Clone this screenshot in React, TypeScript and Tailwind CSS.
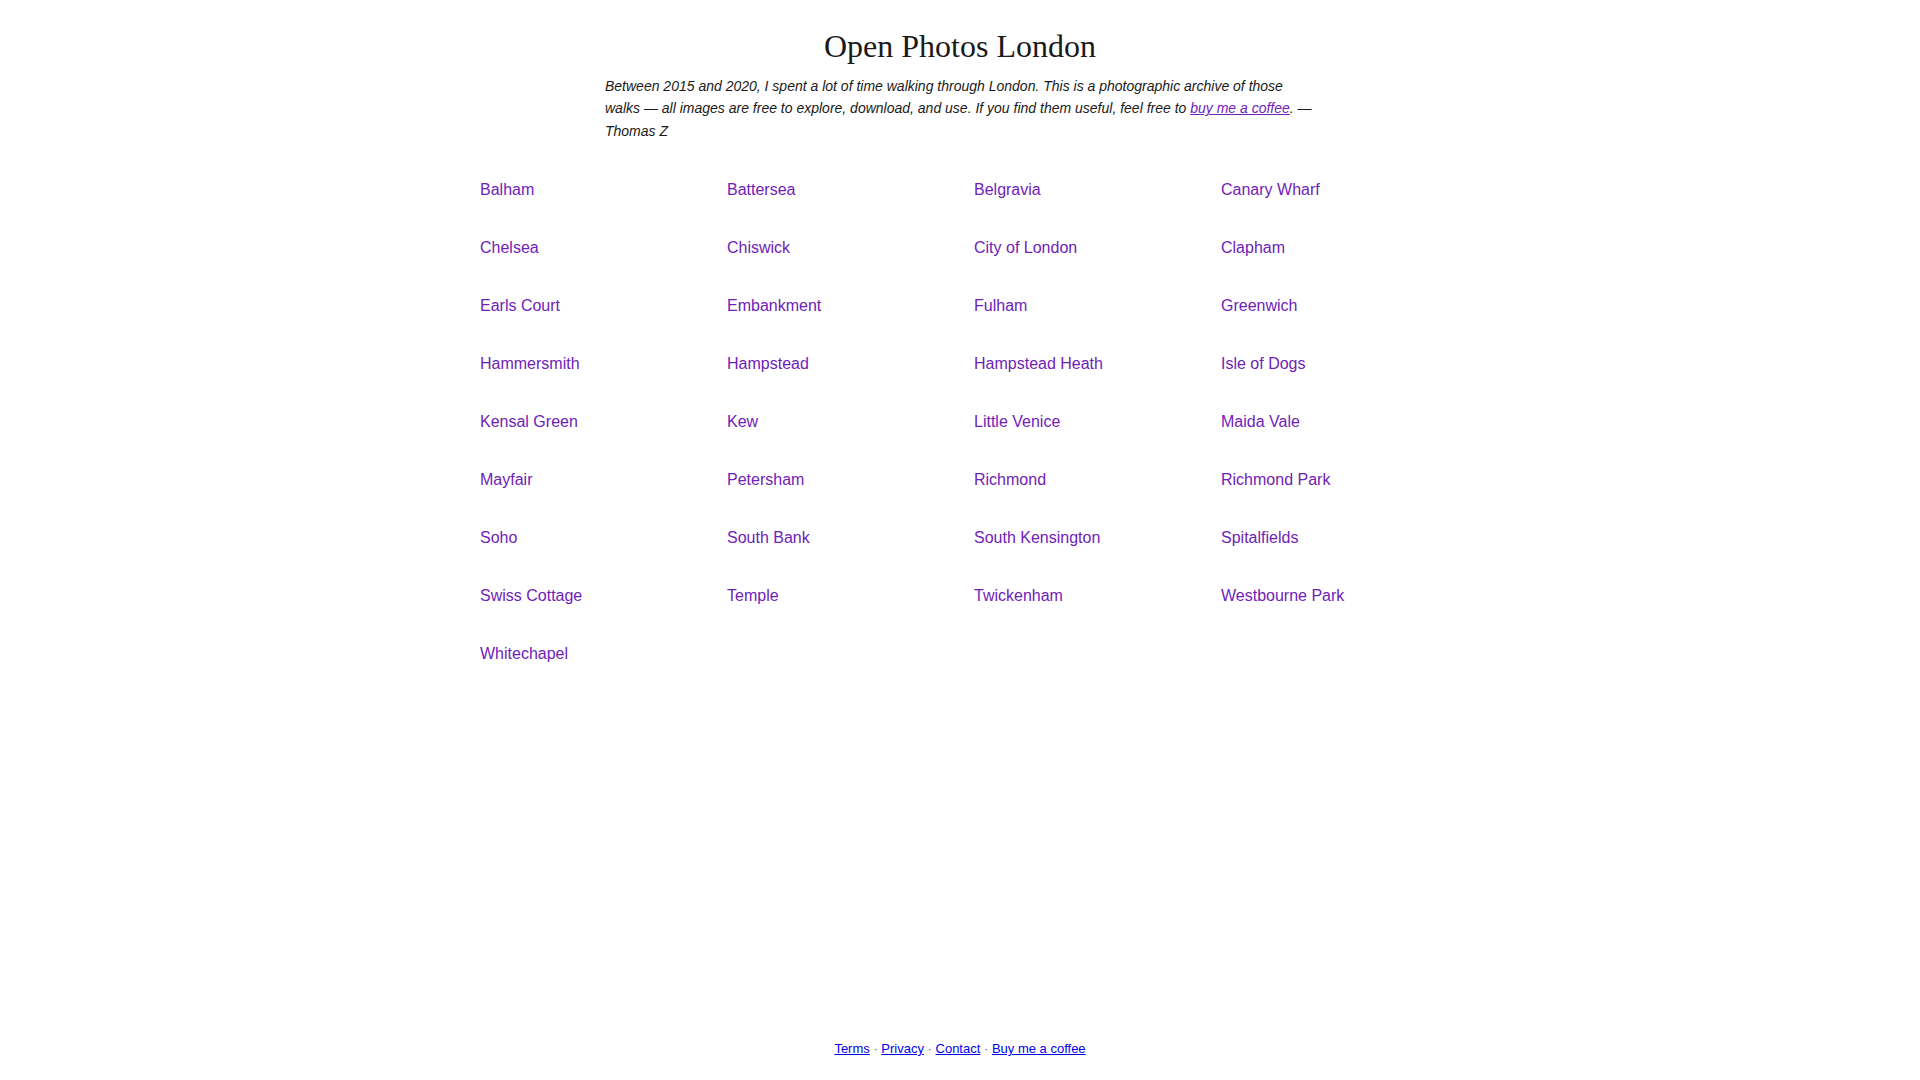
import React from "react";

const places = [
  "Balham", "Battersea", "Belgravia", "Canary Wharf",
  "Chelsea", "Chiswick", "City of London", "Clapham",
  "Earls Court", "Embankment", "Fulham", "Greenwich",
  "Hammersmith", "Hampstead", "Hampstead Heath", "Isle of Dogs",
  "Kensal Green", "Kew", "Little Venice", "Maida Vale",
  "Mayfair", "Petersham", "Richmond", "Richmond Park",
  "Soho", "South Bank", "South Kensington", "Spitalfields",
  "Swiss Cottage", "Temple", "Twickenham", "Westbourne Park",
  "Whitechapel",
];

export default function App() {
  return (
    <div className="min-h-screen flex flex-col bg-white text-[#1a1a1a] font-['Liberation_Sans',Arial,sans-serif]">
      <main className="flex-1 flex flex-col items-center pt-[27px]">
        <h1 className="font-['Liberation_Serif','Times_New_Roman',serif] text-[32px] leading-[38px] font-normal text-[#1a1a1a] text-center">
          Open Photos London
        </h1>
        <p className="mt-[10px] w-[710px] text-[14px] leading-[22.4px] italic text-[#1a1a1a]">
          Between 2015 and 2020, I spent a lot of time walking through London. This is a photographic archive of those walks — all images are free to explore, download, and use. If you find them useful, feel free to{" "}
          <a href="#" className="text-[#6f22b8] underline">buy me a coffee</a>. — Thomas Z
        </p>
        <div className="mt-[19px] grid grid-cols-[repeat(4,219px)] gap-x-[28px]">
          {places.map((p) => (
            <a
              key={p}
              href="#"
              className="block py-[20px] text-[16px] leading-[18px] text-[#6f22b8] no-underline"
            >
              {p}
            </a>
          ))}
        </div>
      </main>
      <footer className="py-[20px] text-center text-[13px] leading-[20.8px] text-[#666]">
        <a href="#" className="text-[#0000ee] underline">Terms</a>
        {" · "}
        <a href="#" className="text-[#0000ee] underline">Privacy</a>
        {" · "}
        <a href="#" className="text-[#0000ee] underline">Contact</a>
        {" · "}
        <a href="#" className="text-[#0000ee] underline">Buy me a coffee</a>
      </footer>
    </div>
  );
}
